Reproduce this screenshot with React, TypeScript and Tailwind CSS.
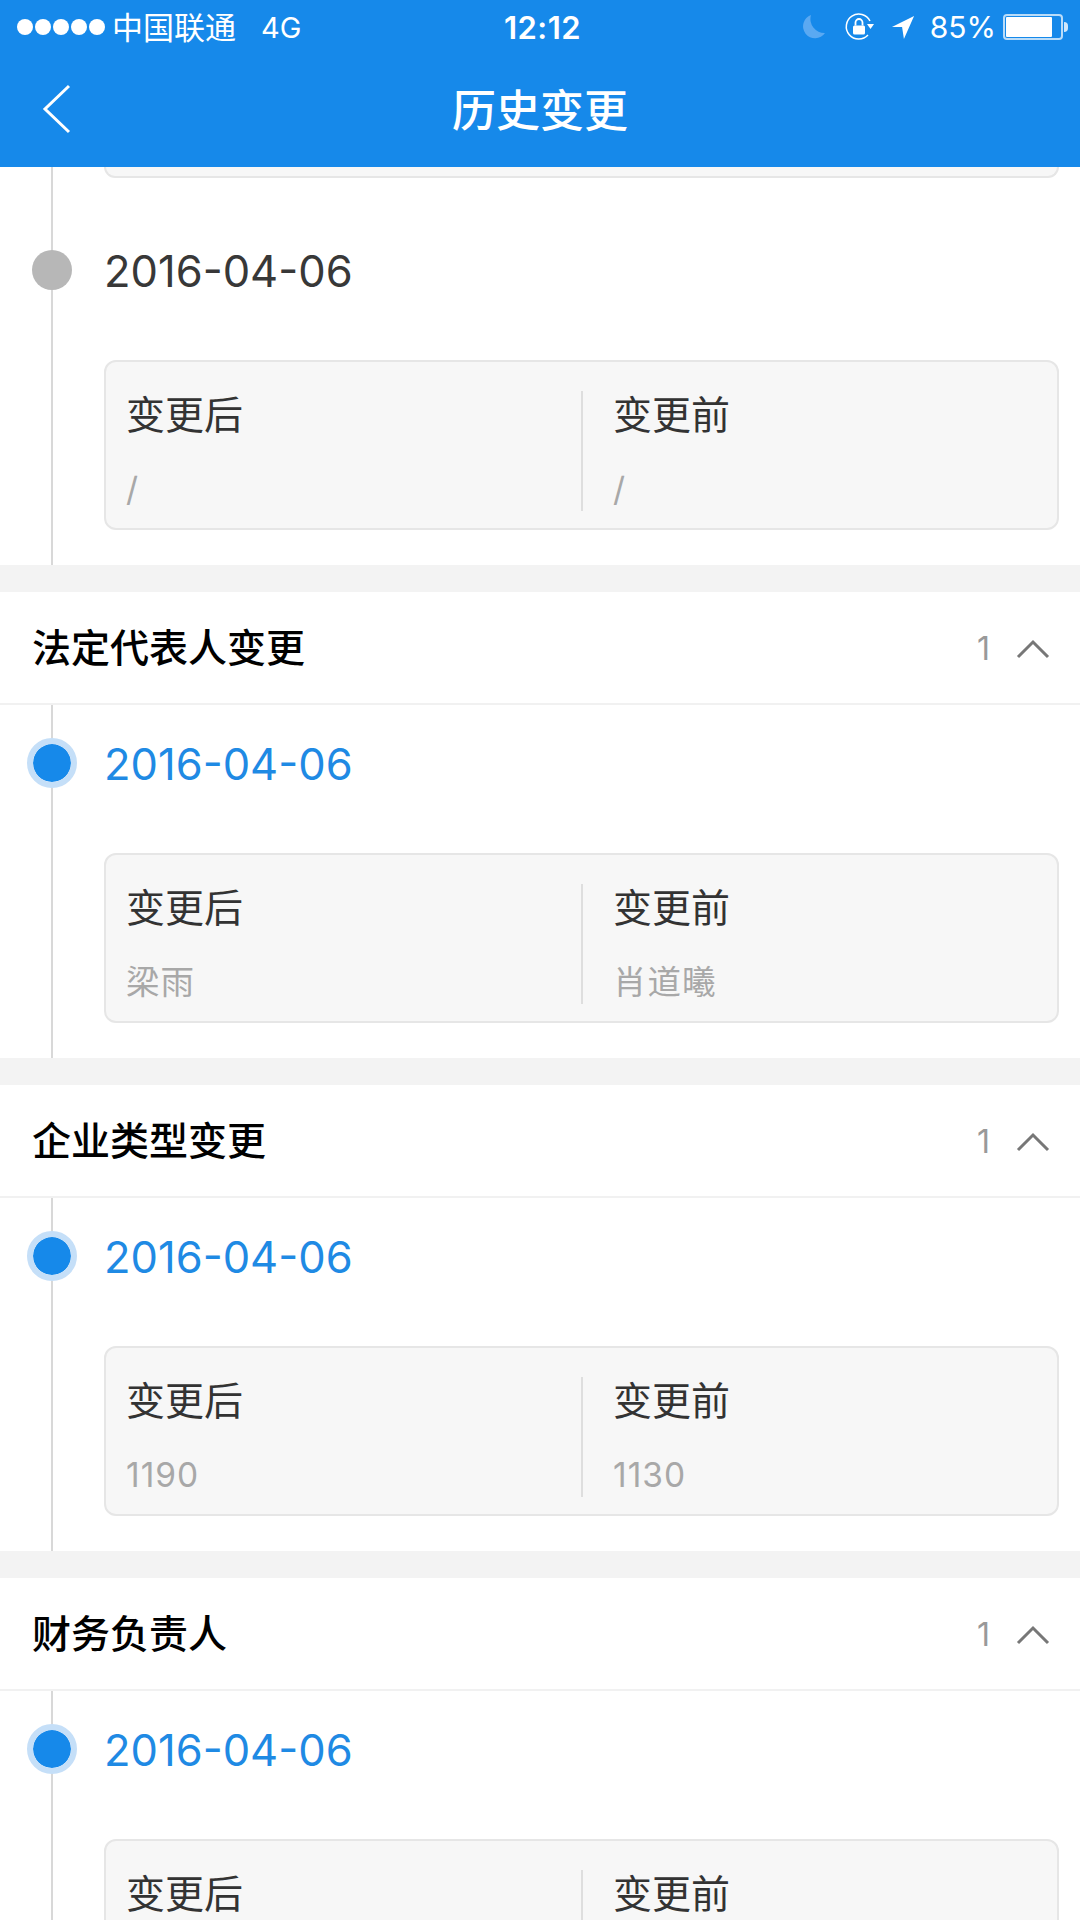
import React from 'react';

const SANS = "font-['Inter','Noto_Sans_CJK_SC',sans-serif]";

const SECTIONS = [
  { title: '法定代表人变更', after: '梁雨', before: '肖道曦' },
  { title: '企业类型变更', after: '1190', before: '1130' },
  { title: '财务负责人', after: '', before: '' },
];

function StatusBar() {
  return (
    <div className="flex items-center justify-between h-[54px] pl-[17px] pr-[12px] text-white">
      <div className="flex items-center flex-1">
        <div className="flex gap-[2px]">
          {[0, 1, 2, 3, 4].map((i) => (
            <span key={i} className="size-[16px] rounded-full bg-white" />
          ))}
        </div>
        <span className="ml-[7px] text-[31px] leading-none">中国联通</span>
        <span className="ml-[25px] text-[29px] leading-none">4G</span>
      </div>
      <span className="text-[31px] font-semibold leading-none tracking-[0.5px]">12:12</span>
      <div className="flex items-center justify-end flex-1">
        <svg width="26" height="28" viewBox="0 0 26 28" className="mr-[16px]">
          <path d="M10 2 A12 12 0 1 0 24 20 A14 14 0 0 1 10 2 Z" fill="#5aa9f2" />
        </svg>
        <svg width="32" height="32" viewBox="0 0 32 32" fill="none" className="mr-[16px]">
          <path d="M25 24 A12.5 12.5 0 1 1 27 10" stroke="#fff" strokeWidth="1.5" />
          <path d="M24 13 L31 13 L27.5 18 Z" fill="#fff" />
          <rect x="10" y="14.5" width="12" height="9" rx="1.5" fill="#fff" />
          <path d="M12.5 14.5 V11.5 A3.5 3.5 0 0 1 19.5 11.5 V14.5" stroke="#fff" strokeWidth="1.8" />
        </svg>
        <svg width="24" height="26" viewBox="0 0 26 28" className="mr-[15px]">
          <path d="M25 2 L14 27 L12 14 L1 14 Z" fill="#fff" />
        </svg>
        <span className="text-[30px] leading-none">85%</span>
        <div className="ml-[7px] flex items-center">
          <div className="w-[60px] h-[26px] rounded-[4px] border-2 border-white/70 p-[1px]">
            <div className="h-full w-[85%] bg-white rounded-[1px]" />
          </div>
          <div className="w-[4px] h-[10px] rounded-r-full bg-white/80 ml-[1px]" />
        </div>
      </div>
    </div>
  );
}

function CompareCard({ after, before }: { after: string; before: string }) {
  return (
    <div className="flex h-[170px] pt-[29px] rounded-[12px] border-2 border-[#e6e6e6] bg-[#f7f7f7]">
      <div className="flex-1 pl-[20px] pt-[1px] h-[120px] border-r-2 border-[#dedede]">
        <p className="text-[39px] leading-[46px] text-[#333]">变更后</p>
        <p className="mt-[27px] text-[33.5px] leading-[48px] tracking-[1px] text-[#a8a8a8]">{after}</p>
      </div>
      <div className="w-[474px] pl-[30px] pt-[1px] h-[120px]">
        <p className="text-[39px] leading-[46px] text-[#333]">变更前</p>
        <p className="mt-[27px] text-[33.5px] leading-[48px] tracking-[1px] text-[#a8a8a8]">{before}</p>
      </div>
    </div>
  );
}

function Timeline({ active, after, before }: { active: boolean; after: string; before: string }) {
  return (
    <div className="relative pl-[104px] pr-[21px] pb-[35px]">
      <div className="absolute left-[51px] top-0 bottom-0 w-[2px] bg-[#d8d8d8]" />
      {active ? (
        <span className="absolute left-[27px] top-[33px] size-[50px] rounded-full bg-[#1689ea] border-[6px] border-[#c5dff8] bg-clip-padding" />
      ) : (
        <span className="absolute left-[32px] top-[38px] size-[40px] rounded-full bg-[#b7b7b7]" />
      )}
      <div className={`h-[148px] pt-[29px] text-[43.5px] leading-[60px] ${active ? 'text-[#1f8ae4]' : 'text-[#383838]'}`}>
        2016-04-06
      </div>
      <CompareCard after={after} before={before} />
    </div>
  );
}

function SectionHeader({ title }: { title: string }) {
  return (
    <div className="flex items-center h-[113px] pt-[2px] pl-[32px] pr-[30px] border-b-2 border-[#f1f1f1]">
      <span className="flex-1 text-[39px] font-medium text-black">{title}</span>
      <span className="text-[32px] text-[#999]">1</span>
      <svg width="34" height="20" viewBox="0 0 34 20" fill="none" className="ml-[26px]">
        <path d="M2 18 L17 3 L32 18" stroke="#777" strokeWidth="3" />
      </svg>
    </div>
  );
}

export default function App() {
  return (
    <div className={`w-[1080px] h-[1920px] overflow-hidden bg-white flex flex-col ${SANS}`}>
      <div className="bg-[#1689ea] h-[167px] shrink-0">
        <StatusBar />
        <div className="relative flex items-center justify-center h-[113px]">
          <svg width="30" height="50" viewBox="0 0 30 50" fill="none" className="absolute left-[42px] top-[30px]">
            <path d="M27 2 L3 25 L27 48" stroke="#fff" strokeWidth="3" />
          </svg>
          <span className="text-[44px] font-medium text-white">历史变更</span>
        </div>
      </div>

      <div className="relative pl-[104px] pr-[21px]">
        <div className="absolute left-[51px] top-0 bottom-0 w-[2px] bg-[#d8d8d8]" />
        <div className="h-[11px] rounded-b-[12px] border-2 border-t-0 border-[#e6e6e6] bg-[#f7f7f7]" />
      </div>
      <div className="relative pt-[34px]">
        <div className="absolute left-[51px] top-0 h-[34px] w-[2px] bg-[#d8d8d8]" />
        <Timeline active={false} after="/" before="/" />
      </div>

      {SECTIONS.map((s) => (
        <div key={s.title}>
          <div className="h-[27px] bg-[#f3f3f3]" />
          <SectionHeader title={s.title} />
          <Timeline active after={s.after} before={s.before} />
        </div>
      ))}
    </div>
  );
}
